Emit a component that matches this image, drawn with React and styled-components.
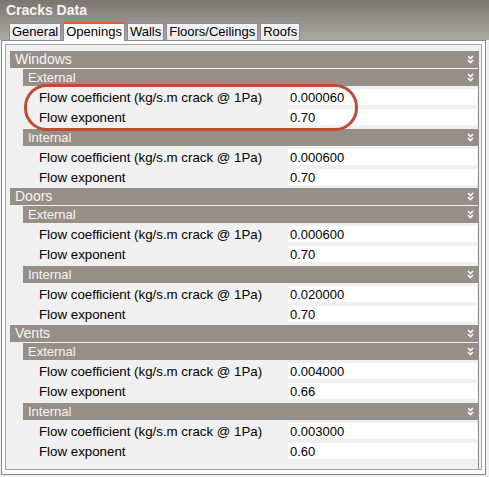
import React from "react";
import styled, { createGlobalStyle } from "styled-components";

const GlobalStyle = createGlobalStyle`
  html, body {
    margin: 0;
    padding: 0;
    background: #f0f0f0;
  }
  body {
    font-family: "Liberation Sans", Arial, sans-serif;
  }
`;

const Window = styled.div`
  width: 489px;
  height: 477px;
  overflow: hidden;
  background: #f0f0f0;
  display: flex;
  flex-direction: column;
`;

const Top = styled.div`
  height: 40px;
  flex: none;
  background: linear-gradient(#7b766f, #aba9a5);
  display: flex;
  flex-direction: column;
`;

const Title = styled.div`
  height: 22px;
  box-sizing: border-box;
  padding: 1px 0 0 6px;
  font-size: 14px;
  font-weight: bold;
  line-height: 18px;
  color: #f4f4f2;
`;

const TabRow = styled.div`
  height: 18px;
  display: flex;
  align-items: flex-end;
  gap: 2px;
  padding-left: 9px;
`;

const Tab = styled.div`
  position: relative;
  z-index: ${(p) => (p.$active ? 2 : 1)};
  box-sizing: border-box;
  height: ${(p) => (p.$active ? 19 : 17)}px;
  margin-bottom: ${(p) => (p.$active ? -1 : 0)}px;
  padding: 0 2px;
  border: 1px solid #898c95;
  border-bottom: none;
  border-top: ${(p) => (p.$active ? "2px solid #ea5f16" : "1px solid #898c95")};
  background: ${(p) => (p.$active ? "#ffffff" : "linear-gradient(#f4f5f8, #e8e9ee)")};
  font-size: 13px;
  line-height: 16px;
  color: #000;
`;

const Panel = styled.div`
  flex: none;
  height: 435px;
  box-sizing: border-box;
  margin: 0 3px 2px 1px;
  border: 1px solid #898989;
  background: #ffffff;
  padding: 3px 3px 4px 3px;
  display: flex;
`;

const Content = styled.div`
  position: relative;
  flex: 1;
  border: 1px solid #a3a3a3;
  background: #f0f0f0;
  padding: 6px 2px 0 4px;
`;

const Scroll = styled.div`
  border-right: 1px solid #8e8e8e;
  height: 100%;
  box-sizing: border-box;
`;

const Bar = styled.div`
  height: 17px;
  margin: 0 0 1px ${(p) => (p.$sub ? 13 : 0)}px;
  padding: 0 4px 0 5px;
  background: #958f88;
  color: #f6f6f4;
  font-size: ${(p) => (p.$sub ? 13 : 14)}px;
  line-height: 17px;
  display: flex;
  align-items: center;
  justify-content: space-between;
`;

const SubList = styled.div`
  display: flex;
  flex-direction: column;
  gap: 1px;
`;

const Rows = styled.div`
  padding-bottom: 1px;
`;

const Row = styled.div`
  height: 20px;
  display: grid;
  grid-template-columns: 249px 1fr;
  align-items: center;
  padding: 0 1px 0 29px;
`;

const Label = styled.span`
  font-size: 13.3px;
  color: #000;
  white-space: nowrap;
`;

const Value = styled.input`
  height: 16px;
  box-sizing: border-box;
  border: none;
  outline: none;
  margin: 0;
  padding: 0 2px;
  background: #fff;
  font-family: "Liberation Sans", Arial, sans-serif;
  font-size: 13px;
  color: #000;
  width: 100%;
`;

const Highlight = styled.div`
  position: absolute;
  left: 18px;
  top: 39px;
  width: 334px;
  height: 47px;
  box-sizing: border-box;
  border: 3px solid #c24a30;
  border-radius: 23px;
  pointer-events: none;
`;

const Chevron = () => (
  <svg width="7" height="9" viewBox="0 0 7 9">
    <path
      d="M1 1 L3.5 3.5 L6 1 M1 5 L3.5 7.5 L6 5"
      fill="none"
      stroke="#ffffff"
      strokeWidth="1.6"
    />
  </svg>
);

const tabs = ["General", "Openings", "Walls", "Floors/Ceilings", "Roofs"];

const groups = [
  {
    name: "Windows",
    subs: [
      { name: "External", coef: "0.000060", exp: "0.70" },
      { name: "Internal", coef: "0.000600", exp: "0.70" },
    ],
  },
  {
    name: "Doors",
    subs: [
      { name: "External", coef: "0.000600", exp: "0.70" },
      { name: "Internal", coef: "0.020000", exp: "0.70" },
    ],
  },
  {
    name: "Vents",
    subs: [
      { name: "External", coef: "0.004000", exp: "0.66" },
      { name: "Internal", coef: "0.003000", exp: "0.60" },
    ],
  },
];

export default function App() {
  return (
    <>
      <GlobalStyle />
      <Window>
        <Top>
          <Title>Cracks Data</Title>
          <TabRow>
            {tabs.map((t) => (
              <Tab key={t} $active={t === "Openings"}>
                {t}
              </Tab>
            ))}
          </TabRow>
        </Top>
        <Panel>
          <Content>
            <Scroll>
              {groups.map((g) => (
                <div key={g.name}>
                  <Bar>
                    <span>{g.name}</span>
                    <Chevron />
                  </Bar>
                  <SubList>
                    {g.subs.map((s) => (
                      <div key={s.name}>
                        <Bar $sub>
                          <span>{s.name}</span>
                          <Chevron />
                        </Bar>
                        <Rows>
                          <Row>
                            <Label>Flow coefficient (kg/s.m crack @ 1Pa)</Label>
                            <Value readOnly value={s.coef} />
                          </Row>
                          <Row>
                            <Label>Flow exponent</Label>
                            <Value readOnly value={s.exp} />
                          </Row>
                        </Rows>
                      </div>
                    ))}
                  </SubList>
                </div>
              ))}
            </Scroll>
            <Highlight />
          </Content>
        </Panel>
      </Window>
    </>
  );
}
